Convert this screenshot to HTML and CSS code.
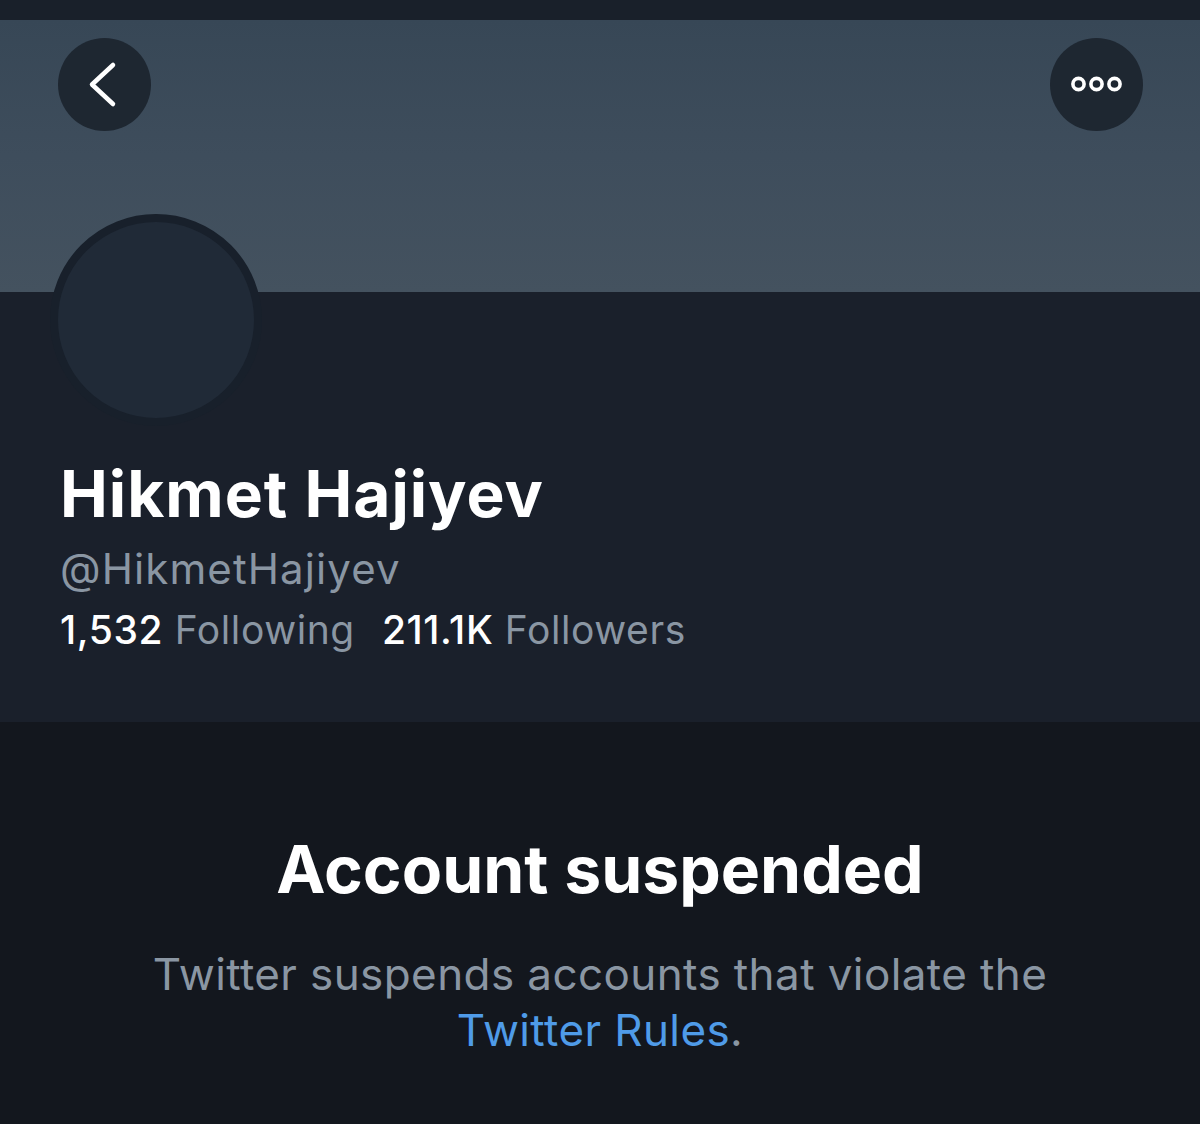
FILE: index.html
```html
<!DOCTYPE html>
<html lang="en">
<head>
<meta charset="utf-8">
<title>Hikmet Hajiyev</title>
<link rel="stylesheet" href="styles.css">
</head>
<body>
<div class="statusbar"></div>
<header class="banner">
  <button class="circle-btn" aria-label="Back">
    <svg width="93" height="93" viewBox="0 0 93 93"><path d="M55 27 L34 46.5 L55 66" fill="none" stroke="#fff" stroke-width="4.5" stroke-linecap="round" stroke-linejoin="round"/></svg>
  </button>
  <button class="circle-btn" aria-label="More">
    <svg width="93" height="93" viewBox="0 0 93 93"><g fill="none" stroke="#fff" stroke-width="3.6"><circle cx="28.5" cy="46" r="5.6"/><circle cx="46.5" cy="46" r="5.6"/><circle cx="64.5" cy="46" r="5.6"/></g></svg>
  </button>
</header>
<section class="profile">
  <div class="avatar"></div>
  <h1 class="name">Hikmet Hajiyev</h1>
  <div class="handle">@HikmetHajiyev</div>
  <div class="stats">
    <span class="stat"><b>1,532</b> Following</span>
    <span class="stat"><b>211.1K</b> Followers</span>
  </div>
</section>
<section class="suspended">
  <h2 class="title">Account suspended</h2>
  <p class="desc">Twitter suspends accounts that violate the<br><a class="link" href="#">Twitter Rules</a>.</p>
</section>
</body>
</html>
```

FILE: styles.css
```css
html, body {
  margin: 0;
  padding: 0;
}
body {
  background: #13171e;
  font-family: Inter, "Noto Sans", "Liberation Sans", sans-serif;
  width: 1200px;
  height: 1124px;
  overflow: hidden;
}
.statusbar {
  height: 20px;
  background: #19202a;
}
.banner {
  height: 272px;
  box-sizing: border-box;
  padding: 18px 57px 0 58px;
  background: linear-gradient(180deg, #374756 0%, #3e4d5c 50%, #44525f 100%);
  display: flex;
  justify-content: space-between;
  align-items: flex-start;
}
.circle-btn {
  width: 93px;
  height: 93px;
  border-radius: 50%;
  border: 0;
  padding: 0;
  margin: 0;
  background: #1e2731;
  display: flex;
  align-items: center;
  justify-content: center;
}
.circle-btn svg {
  display: block;
}
.profile {
  display: flow-root;
  height: 430px;
  box-sizing: border-box;
  background: #1a202b;
  padding: 0 0 0 58px;
}
.avatar {
  width: 196px;
  height: 196px;
  border: 8px solid #18202b;
  border-radius: 50%;
  background: #202a37;
  margin: -78px 0 0 -8px;
}
.name {
  margin: 31px 0 0 2px;
  font-size: 64px;
  font-weight: 700;
  line-height: 74px;
  color: #ffffff;
  letter-spacing: 1px;
}
.handle {
  margin: 10px 0 0 2px;
  font-size: 42px;
  line-height: 56px;
  color: #8a96a3;
  font-weight: 400;
  letter-spacing: 1.1px;
}
.stats {
  margin: 5px 0 0 2px;
  display: flex;
  gap: 27px;
  font-size: 39px;
  line-height: 56px;
  color: #8a96a3;
  letter-spacing: 0.6px;
}
.stat b {
  color: #ffffff;
  font-weight: 500;
}
.suspended {
  text-align: center;
  padding-top: 107px;
}
.title {
  margin: 0;
  font-size: 66px;
  font-weight: 700;
  line-height: 80px;
  color: #ffffff;
  letter-spacing: 0;
}
.desc {
  margin: 37px 0 0;
  font-size: 44px;
  line-height: 56px;
  color: #8a96a3;
  letter-spacing: 0.4px;
}
.link {
  color: #4f9be8;
  text-decoration: none;
}
```
